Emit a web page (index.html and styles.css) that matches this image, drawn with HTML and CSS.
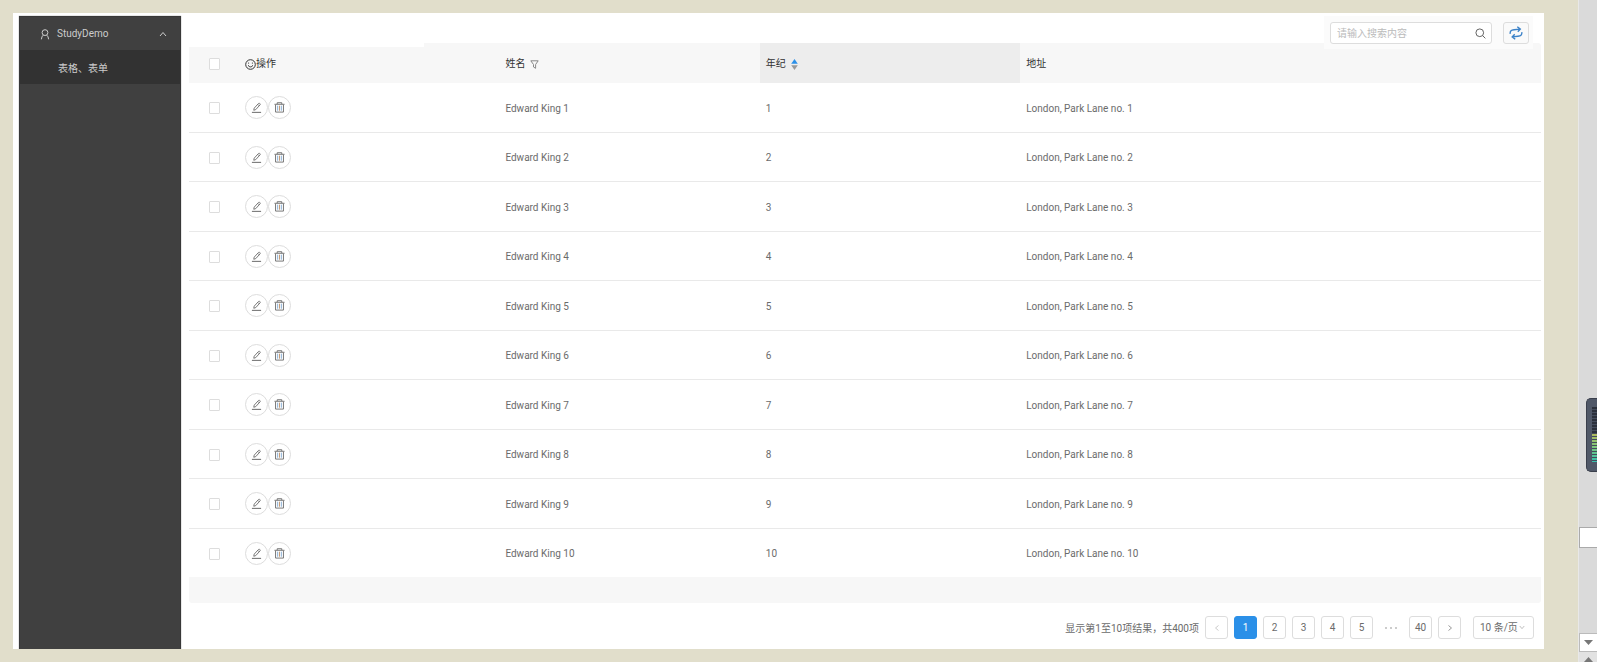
FILE: index.html
```
<!DOCTYPE html>
<html lang="zh-CN">
<head>
<meta charset="utf-8">
<title>StudyDemo</title>
<link rel="stylesheet" href="styles.css">
</head>
<body>
<svg class="defs" aria-hidden="true">
  <symbol id="edit" viewBox="0 0 12 12"><path d="M1 11.3h10" stroke-width="1.1"/><path d="M3 9l.5-2.3L8.3 1.5q.6-.4 1.1 0l.5.5q.4.5 0 1.1L5.2 8.3zM7.4 2.6l1.5 1.5"/></symbol>
  <symbol id="trash" viewBox="0 0 12 12"><path d="M.5 2.500h11M3.500 2.400V.8h5v1.600"/><path d="M1.700 3v8h8.600V3"/><path d="M4 4v5.500M8 4v5.500" stroke="#7fa6cf"/><path d="M6 4v5.500" stroke="#c0936c"/></symbol>
</svg>
<div class="page">
  <div class="panel">
    <nav class="sidebar">
      <button class="menu-head" type="button">
        <svg class="user" viewBox="0 0 10 11"><circle cx="5" cy="3.6" r="2.9"/><path d="M3.3 6.1Q1.6 7.4 1.4 10.3M6.7 6.1Q8.4 7.4 8.6 10.3"/></svg>
        <span class="menu-title">StudyDemo</span>
        <svg class="caret" viewBox="0 0 8 6"><path d="M1 5l3-3.500L7 5"/></svg>
      </button>
      <a class="menu-item" href="#">表格、表单</a>
    </nav>
    <main class="content">
      <div class="tools">
        <label class="search">
          <input type="text" placeholder="请输入搜索内容" aria-label="搜索">
          <svg viewBox="0 0 12 12"><circle cx="5.2" cy="5.2" r="4.2"/><path d="M8.3 8.3l3 3"/></svg>
        </label>
        <button class="refresh" type="button" aria-label="刷新">
          <svg viewBox="0 0 14 14"><path d="M1.2 7.800C.8 4.800 2.400 4 5 3.700l6-.6M8.300.800l3 2.300-2.500 2.700M12.800 6.200c.4 3-1.200 3.800-3.800 4.100l-6 .6M5.700 8.200l-2.500 2.700 3 2.300"/></svg>
        </button>
      </div>
      <table class="grid">
        <colgroup><col class="c-check"><col class="c-col"><col class="c-col"><col class="c-col"><col></colgroup>
        <thead>
          <tr>
            <th class="check"><input type="checkbox" aria-label="全选"></th>
            <th><span class="head"><svg class="smile" viewBox="0 0 11 11"><circle cx="5.5" cy="5.5" r="4.8"/><path d="M3 6.3q2.500 3.200 5 0M3.600 3.600v1M7.400 3.600v1"/></svg>操作</span></th>
            <th><span class="head">姓名<svg class="filter" viewBox="0 0 9 9"><path d="M.8.8h7.400L5.600 4.500v3.800L3.500 7V4.500z"/></svg></span></th>
            <th class="sorted"><span class="head">年纪<svg class="sort" viewBox="0 0 7 11"><path d="M3.500 0L6.800 4.800H.2z" fill="#2b90e8"/><path d="M.2 6.200h6.600L3.500 11z" fill="#999"/></svg></span></th>
            <th>地址</th>
          </tr>
        </thead>
        <tbody id="rows"></tbody>
        <tfoot><tr><td colspan="5"></td></tr></tfoot>
      </table>
      <div class="pager">
        <span class="total">显示第1至10项结果，共400项</span>
        <button type="button" class="off" aria-label="上一页"><svg viewBox="0 0 6 8"><path d="M4.500 1.500L1.500 4l3 2.500"/></svg></button>
        <button type="button" class="on">1</button>
        <button type="button">2</button>
        <button type="button">3</button>
        <button type="button">4</button>
        <button type="button">5</button>
        <span class="dots"><i></i><i></i><i></i></span>
        <button type="button">40</button>
        <button type="button" aria-label="下一页"><svg viewBox="0 0 6 8"><path d="M1.500 1.500l3 2.500-3 2.500"/></svg></button>
        <label class="size">
          <select aria-label="每页条数"><option>10 条/页</option></select>
          <svg viewBox="0 0 8 6"><path d="M1 1l3 3.500L7 1"/></svg>
        </label>
      </div>
    </main>
  </div>
</div>
<aside class="rail">
  <div class="meter"><div class="bars"></div></div>
  <div class="thumb"></div>
  <div class="down"><svg viewBox="0 0 9 5"><path d="M0 0h9L4.500 5z"/></svg></div>
  <div class="up"><svg viewBox="0 0 9 5"><path d="M0 5h9L4.500 0z"/></svg></div>
</aside>
<script src="rows.js"></script>
</body>
</html>
```
FILE: styles.css
```
* { box-sizing: border-box; }
body {
  margin: 0;
  display: flex;
  min-height: 100vh;
  background: #e1decb;
  color: #6b6b6b;
  font: 10px/16px Roboto, "Noto Sans CJK SC", sans-serif;
  overflow: hidden;
}
button, input, select { font: inherit; color: inherit; }
svg { fill: none; stroke: currentColor; flex: none; display: block; }
.defs { position: absolute; width: 0; height: 0; }
.page { flex: 1; padding: 13px 34px 13px 13px; display: flex; }
.panel { flex: 1; display: flex; background: #fff; padding: 3px 3px 0 6px; }
.sidebar { width: 162px; background: #404040; border: 1px solid #383838; border-bottom: 0; box-shadow: 0 0 1px #777; clip-path: inset(-1px -1px 0 -1px); color: #ccc; }
.menu-head { display: flex; align-items: center; width: 100%; height: 33px; padding: 1px 13px 0 20px; border: 0; background: none; text-align: left; }
.user { width: 10px; height: 11px; }
.menu-title { flex: 1; padding-left: 7px; }
.caret { width: 8px; height: 6px; }
.menu-item { display: flex; align-items: center; height: 34px; padding: 3px 0 0 38px; background: #323232; color: #ccc; text-decoration: none; }
.content { position: relative; flex: 1; padding: 27px 0 10px 8px; }
.content::before { content: ""; position: absolute; top: 27px; left: 8px; width: 235px; height: 4px; background: #fff; }
.tools { position: absolute; top: 0; right: 8px; display: flex; gap: 11px; padding: 6px 4px 5px 6px; background: #fbfbfb; }
.search, .refresh, .size { display: flex; align-items: center; border: 1px solid #ddd; border-radius: 3px; background: #fff; }
.search { width: 162px; height: 22px; padding: 0 5px 0 6px; }
.search input { flex: 1; min-width: 0; padding: 1px 0 0; border: 0; outline: 0; background: none; }
.search input::placeholder { color: #bbb; }
.search svg { width: 11px; height: 11px; color: #555; }
.refresh { justify-content: center; width: 26px; height: 22px; padding: 0; color: #3c82c8; background: #fafafa; }
.refresh svg { width: 14px; height: 14px; stroke-width: 1.4; }
.grid { width: 100%; table-layout: fixed; border-collapse: separate; border-spacing: 0; }
.c-check { width: 50px; }
.c-col { width: 19.26%; }
.grid th { height: 40px; padding: 2px 0 0 6px; background: #f7f7f7; color: #333; font-weight: 400; text-align: left; }
.grid th:last-child { border-top-right-radius: 3px; }
.grid .sorted { background: #ededed; }
.head { display: flex; align-items: center; }
.smile { width: 11px; height: 11px; stroke-width: 1; }
.filter { width: 9px; height: 9px; margin-left: 5px; color: #888; }
.sort { width: 7px; height: 11px; margin-left: 5px; stroke: none; }
.grid td { height: 49px; padding: 2px 0 0 6px; border-bottom: 1px solid #e9e9e9; }
.grid tbody tr:nth-child(odd) td { height: 50px; }
.grid tbody tr:last-child td { border-bottom-color: #f7f7f7; }
.grid .check { padding: 1px 0 0 20px; }
.grid .ops { padding-top: 0; }
.grid tfoot td { height: 25px; border: 0; background: #f7f7f7; border-radius: 0 0 3px 3px; }
.check input { appearance: none; display: block; width: 11px; height: 12px; margin: 0; border: 1px solid #ddd; border-radius: 1px; background: #fff; }
.actions { display: flex; }
.actions button { display: flex; align-items: center; justify-content: center; width: 23px; height: 23px; padding: 0; border: 1px solid #ddd; border-radius: 50%; background: #fff; }
.actions svg { width: 11px; height: 11px; }
.pager { display: flex; align-items: center; justify-content: flex-end; gap: 6px; padding: 13px 7px 0 0; }
.pager button { display: flex; align-items: center; justify-content: center; width: 23px; height: 23px; padding: 1px 0 0; border: 1px solid #ddd; border-radius: 3px; background: #fff; }
.total, .size select { padding-top: 2px; }
.pager button svg { width: 6px; height: 8px; color: #999; }
.pager .off svg { color: #ccc; }
.pager .on { background: #2b90e8; border-color: #2b90e8; color: #fff; }
.dots { display: flex; justify-content: center; gap: 3px; width: 24px; }
.dots i { width: 2px; height: 2px; border-radius: 50%; background: #bbb; }
.size { position: relative; width: 61px; height: 23px; margin-left: 6px; }
.size select { appearance: none; width: 100%; height: 100%; padding: 1px 0 0 6px; border: 0; background: none; }
.size svg { position: absolute; right: 8px; width: 6px; height: 5px; color: #aaa; }
.rail { position: relative; display: flex; flex-direction: column; justify-content: flex-end; width: 19px; background: #dadada; border-left: 1px solid #e8e8e8; }
.meter { position: absolute; top: 398px; right: 0; width: 11px; height: 74px; padding: 8px 0 9px 5px; border: 1px solid #3a3f4c; border-right: 0; border-radius: 5px 0 0 5px; background: #505868; }
.bars { height: 100%; background: repeating-linear-gradient(transparent 0 2px, #444c5c 2px 3px), linear-gradient(#2b303b 0 47%, #b5b85a 47%, #7fc77c 72%, #35bfae); }
.thumb { height: 21px; margin-bottom: 85px; border: 1px solid #aaa; border-right: 0; background: #fff; }
.down { display: flex; align-items: center; justify-content: center; height: 19px; border: 1px solid #bbb; border-right: 0; background: #fff; }
.up { display: flex; justify-content: center; height: 10px; padding-top: 5px; background: #e2e2e2; }
.rail svg { width: 9px; height: 5px; fill: #777; stroke: none; }
```
FILE: rows.js
```
const rows = document.getElementById("rows");
for (let i = 1; i <= 10; i++) {
  rows.insertAdjacentHTML("beforeend", `<tr>
    <td class="check"><input type="checkbox" aria-label="选择 ${i}"></td>
    <td class="ops"><div class="actions">
      <button type="button" aria-label="编辑"><svg><use href="#edit"/></svg></button>
      <button type="button" aria-label="删除"><svg><use href="#trash"/></svg></button>
    </div></td>
    <td>Edward King ${i}</td><td>${i}</td><td>London, Park Lane no. ${i}</td>
  </tr>`);
}
```
